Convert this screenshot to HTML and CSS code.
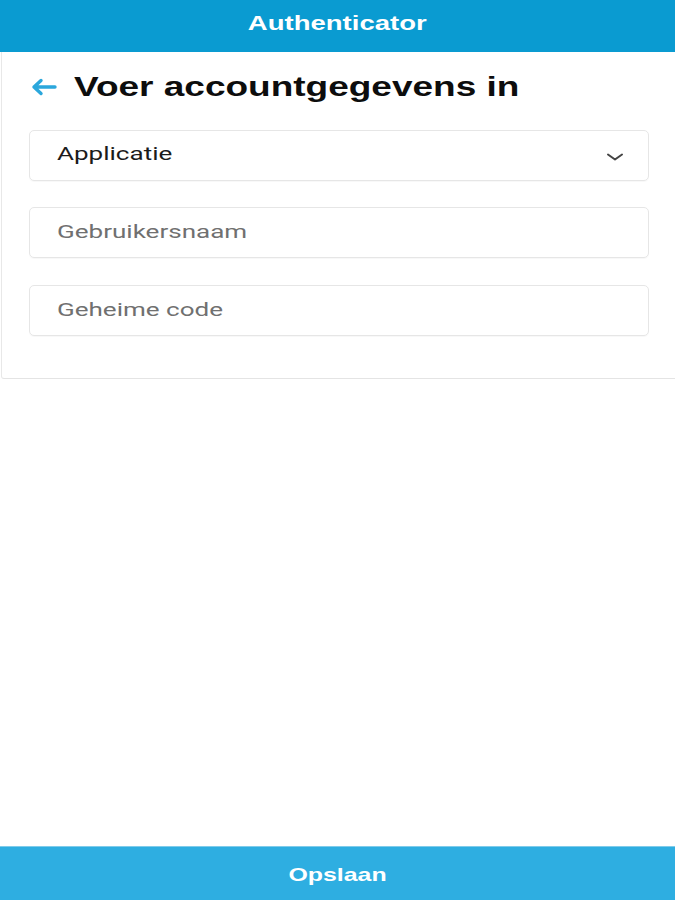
FILE: index.html
```html
<!DOCTYPE html>
<html>
<head>
<meta charset="utf-8">
<link rel="stylesheet" href="styles.css">
</head>
<body>
<div class="app">
  <header class="topbar"><span class="wide center">Authenticator</span></header>
  <main class="card">
    <div class="title-row">
      <svg class="back" width="28" height="20" viewBox="0 0 28 20"><path d="M11 3.5 L4 10 L11 16.5 M4 10 H25" fill="none" stroke="#2ba7dc" stroke-width="3.4" stroke-linecap="round" stroke-linejoin="round"/></svg>
      <h1 class="title"><span class="wide-t">Voer accountgegevens in</span></h1>
    </div>
    <div class="field select">
      <span class="value wide-r">Applicatie</span>
      <svg class="chev" width="18" height="10" viewBox="0 0 18 10"><path d="M2 2.5 L9 7.5 L16 2.5" fill="none" stroke="#444" stroke-width="2" stroke-linecap="round" stroke-linejoin="round"/></svg>
    </div>
    <div class="field"><span class="placeholder wide-r">Gebruikersnaam</span></div>
    <div class="field last"><span class="placeholder wide-r">Geheime code</span></div>
  </main>
  <div class="spacer"></div>
  <footer class="savebar"><span class="wide center">Opslaan</span></footer>
</div>
</body>
</html>
```
FILE: styles.css
```css
html, body { margin: 0; padding: 0; }
body { background: #fff; font-family: Roboto, "Liberation Sans", Arial, sans-serif; }
.app { display: flex; flex-direction: column; height: 900px; width: 675px; overflow: hidden; }
.wide { display: inline-block; transform: scaleX(1.31); transform-origin: left center; }
.wide.center { transform-origin: center center; }
.wide-t { display: inline-block; transform: scaleX(1.37); transform-origin: left center; }
.wide-r { display: inline-block; transform: scaleX(1.37); transform-origin: left center; }
.topbar {
  height: 52px; background: #0a9bd1; color: #fff;
  display: flex; align-items: center; justify-content: center;
  font-family: "Liberation Sans", Arial, sans-serif; font-weight: bold; font-size: 21px;
  padding-bottom: 6px; box-sizing: border-box;
}
.card {
  margin-left: 1px; border-left: 1px solid #e8e8e8; border-bottom: 1px solid #e4e4e4;
  padding: 20px 26px 42px 27px; display: flex; flex-direction: column; gap: 26px;
  border-bottom-left-radius: 3px;
}
.title-row { display: flex; align-items: center; gap: 16px; height: 30px; margin-bottom: 2px; }
.back { margin-left: 1px; }
.title { margin: 0; font-family: "Liberation Sans", Arial, sans-serif; font-weight: bold; font-size: 27px; color: #0d0d0d; }
.field {
  height: 51px; box-sizing: border-box; border: 1px solid #e6e6e6; border-radius: 5px;
  display: flex; align-items: center; padding: 0 24px 0 27px; font-size: 19px;
  box-shadow: 0 1px 1px rgba(0,0,0,0.03);
}
.field.last { margin-top: 1px; }
.select { justify-content: space-between; }
.value { color: #1b1b1b; padding-bottom: 4px; }
.placeholder { color: #707070; padding-bottom: 2px; }
.chev { margin-top: 2px; }
.spacer { flex: 1; }
.savebar {
  height: 54px; background: #2eaee1; color: #fff;
  display: flex; align-items: center; justify-content: center;
  font-family: "Liberation Sans", Arial, sans-serif; font-weight: bold; font-size: 19px;
  border-top: 1px solid #7fcbea; box-sizing: border-box; padding-top: 3px;
}
```
